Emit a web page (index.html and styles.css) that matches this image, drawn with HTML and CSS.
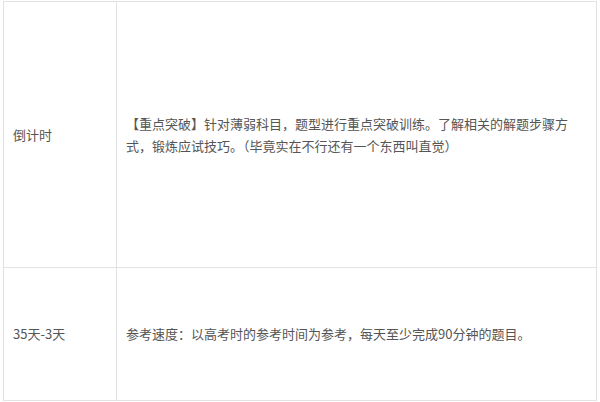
FILE: index.html
```html
<!DOCTYPE html>
<html lang="zh-CN">
<head>
  <meta charset="UTF-8" />
  <title>复习计划</title>
  <link rel="stylesheet" href="styles.css">
</head>
<body>
  <div class="wrap">
    <table class="plan">
      <colgroup>
        <col class="col-time">
        <col class="col-desc">
      </colgroup>
      <tr class="row-tall">
        <td>倒计时</td>
        <td>【重点突破】针对薄弱科目，题型进行重点突破训练。了解相关的解题步骤方式，锻炼应试技巧。（毕竟实在不行还有一个东西叫直觉）</td>
      </tr>
      <tr class="row-short">
        <td>35天-3天</td>
        <td>参考速度：以高考时的参考时间为参考，每天至少完成90分钟的题目。</td>
      </tr>
    </table>
  </div>
</body>
</html>
```

FILE: styles.css
```css
body {
  margin: 0;
  background: #fff;
  font-family: "Noto Sans CJK SC", "Noto Sans", sans-serif;
}
.wrap {
  padding: 1px 0 0 3px;
}
.plan {
  width: 594px;
  border-collapse: collapse;
  table-layout: fixed;
  font-size: 13px;
  line-height: 22px;
  color: #555;
}
.col-time {
  width: 113px;
}
.plan td {
  border: 1px solid #e2e2e2;
  padding: 0 8px 0 9px;
  vertical-align: middle;
}
.row-tall td {
  height: 265px;
}
.row-short td {
  height: 132px;
}
```
